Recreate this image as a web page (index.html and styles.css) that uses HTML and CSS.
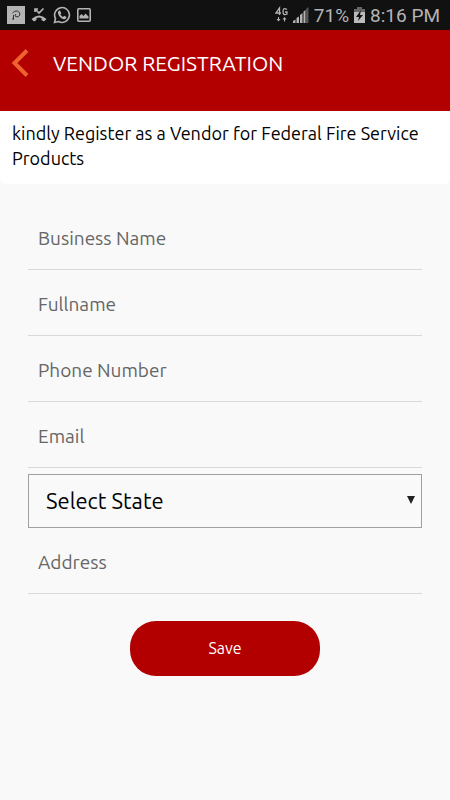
FILE: index.html
```html
<!DOCTYPE html>
<html lang="en">
<head>
<meta charset="utf-8">
<meta name="viewport" content="width=device-width, initial-scale=1">
<title>Vendor Registration</title>
<link rel="stylesheet" href="styles.css">
</head>
<body>
<div class="status">
  <div class="status-group notices">
    <svg width="18" height="18" viewBox="0 0 18 18" aria-hidden="true"><path fill="#b4b4b4" d="M0 0h18v18H0z"/><path fill="none" stroke="#333" stroke-width="1" d="M6.500 13.500V9M5.500 7Q7.500 4.500 10.500 5Q13.500 6 12.800 9Q11.500 12 8.500 10.500Q7.500 9 9 8M5 12.500l1.500 1"/></svg>
    <svg width="16" height="16" viewBox="0 0 16 16" aria-hidden="true"><path fill="none" stroke="#b4b4b4" stroke-width="1.700" d="M4 5V2h3M4.500 2.500L8 6l4.500-4.500"/><path fill="#b4b4b4" d="M.5 12Q8 5 15.500 12L13 14.500l-2.500-1.500v-2Q8 10 5.500 11v2L3 14.500z"/></svg>
    <svg width="18" height="18" viewBox="0 0 18 18" aria-hidden="true"><path fill="none" stroke="#b4b4b4" stroke-width="1.600" d="M1.500 16.500l1-4A7.400 7.400 0 1 1 5.500 15.500z"/><path fill="#b4b4b4" d="M5.500 5l1.500-.5 1.300 2.700-.9 1.200Q8.500 10.300 10 11l1.200-1.200L13.500 11q0 2.500-2.800 2.300Q6.500 12 5 7.500 4.700 6 5.500 5z"/></svg>
    <svg width="14" height="16" viewBox="0 0 14 16" aria-hidden="true"><rect x=".8" y="1.800" width="12.400" height="12.400" rx="1" fill="none" stroke="#b4b4b4" stroke-width="1.600"/><path fill="#b4b4b4" d="M2.500 11.500V9l2-2 2 2 2-2.500 3 3v2z"/></svg>
  </div>
  <div class="status-group readings">
    <svg width="13" height="18" viewBox="0 0 13 18" aria-hidden="true"><path fill="none" stroke="#b4b4b4" stroke-width="1.300" d="M4.500 9V2L1 7h5M12 3.500Q8 1 8 5.500t4 2.500V6h-2"/><path fill="#b4b4b4" d="M3 11h1v2h1.500l-2 2.500-2-2.500H3zM9 15.500h1v-2h1.500l-2-2.500-2 2.500H9z"/></svg>
    <svg width="16" height="16" viewBox="0 0 16 16" aria-hidden="true"><path fill="#b4b4b4" d="M0 14l2.500-1.500V16H0zM3.500 11L6 9.500V16H3.500zM7 8l2.500-2v10H7zM10.500 4.500l2-1.500v13h-2z"/><path fill="#555" d="M13 2l2.500-2v16H13z"/></svg>
    <span class="percent">71%</span>
    <svg width="11" height="16" viewBox="0 0 11 16" aria-hidden="true"><path fill="#666" d="M3 0h5v2h3v4H0V2h3z"/><path fill="#bbb" d="M0 5h11v11H0z"/><path fill="#111" d="M7 3L2 10h3l-1 4 5-6H6z"/></svg>
    <time>8:16 PM</time>
  </div>
</div>
<header class="topbar">
  <button class="back" type="button" aria-label="Back"><svg width="18" height="28" viewBox="0 0 18 28" aria-hidden="true"><path d="M16 1.500L3.500 14 16 26.500" fill="none" stroke="#ed622e" stroke-width="4"/></svg></button>
  <h1>VENDOR REGISTRATION</h1>
</header>
<main>
  <p class="intro">kindly Register as a Vendor for Federal Fire Service Products</p>
  <form class="form">
    <input class="field" type="text" placeholder="Business Name" aria-label="Business Name">
    <input class="field" type="text" placeholder="Fullname" aria-label="Fullname">
    <input class="field" type="tel" placeholder="Phone Number" aria-label="Phone Number">
    <input class="field" type="email" placeholder="Email" aria-label="Email">
    <div class="picker">
      <select aria-label="State"><option>Select State</option></select>
      <svg class="arrow" width="8" height="8" viewBox="0 0 8 8" aria-hidden="true"><path fill="#222" d="M0 0h8L4 8z"/></svg>
    </div>
    <input class="field" type="text" placeholder="Address" aria-label="Address">
    <button class="save" type="button">Save</button>
  </form>
</main>
</body>
</html>
```
FILE: styles.css
```css
* { box-sizing: border-box; }
body {
  margin: 0;
  background: #f9f9f9;
  color: #000;
  font-family: Ubuntu, "Noto Sans", sans-serif;
}
input, select, button { font-family: inherit; }
.status {
  display: flex;
  justify-content: space-between;
  align-items: center;
  height: 30px;
  padding: 0 10px 0 7px;
  background: #111;
  color: #b4b4b4;
  font: 19px/30px Roboto, sans-serif;
}
.status-group { display: flex; align-items: center; }
.status time, .percent { padding-top: 2px; }
.notices { gap: 6px; }
.readings { gap: 5px; }
.topbar {
  display: flex;
  align-items: flex-start;
  gap: 24px;
  height: 81px;
  padding: 18px 11px;
  background: #b20000;
  color: #fff;
}
.back {
  display: flex;
  padding: 0;
  margin-top: 1px;
  border: 0;
  background: none;
}
h1 {
  margin: 0;
  font-size: 21px;
  line-height: 30px;
  font-weight: 400;
}
.intro {
  margin: 0;
  padding: 10px 12px 13px;
  border-radius: 0 0 6px 6px;
  background: #fff;
  font-size: 18px;
  line-height: 25px;
}
.form {
  display: flex;
  flex-direction: column;
  padding: 20px 28px;
}
.field {
  width: 100%;
  height: 66px;
  padding: 2px 10px 0;
  border: 0;
  border-bottom: 1px solid #d8d8d8;
  border-radius: 0;
  outline: 0;
  background: none;
  font-size: 19px;
}
.field::placeholder { color: #666; opacity: 1; }
.picker { position: relative; margin-top: 6px; }
select {
  display: block;
  width: 100%;
  height: 54px;
  padding: 0 17px 2px;
  border: 1px solid #a0a0a0;
  border-radius: 0;
  appearance: none;
  background: #f9f9f9;
  color: #000;
  font-size: 22px;
}
.arrow { position: absolute; top: 22px; right: 7px; pointer-events: none; }
.save {
  align-self: center;
  width: 190px;
  height: 55px;
  margin-top: 27px;
  padding: 0 0 2px;
  border: 0;
  border-radius: 26px;
  background: #b20000;
  color: #fff;
  font-size: 16px;
}
```
